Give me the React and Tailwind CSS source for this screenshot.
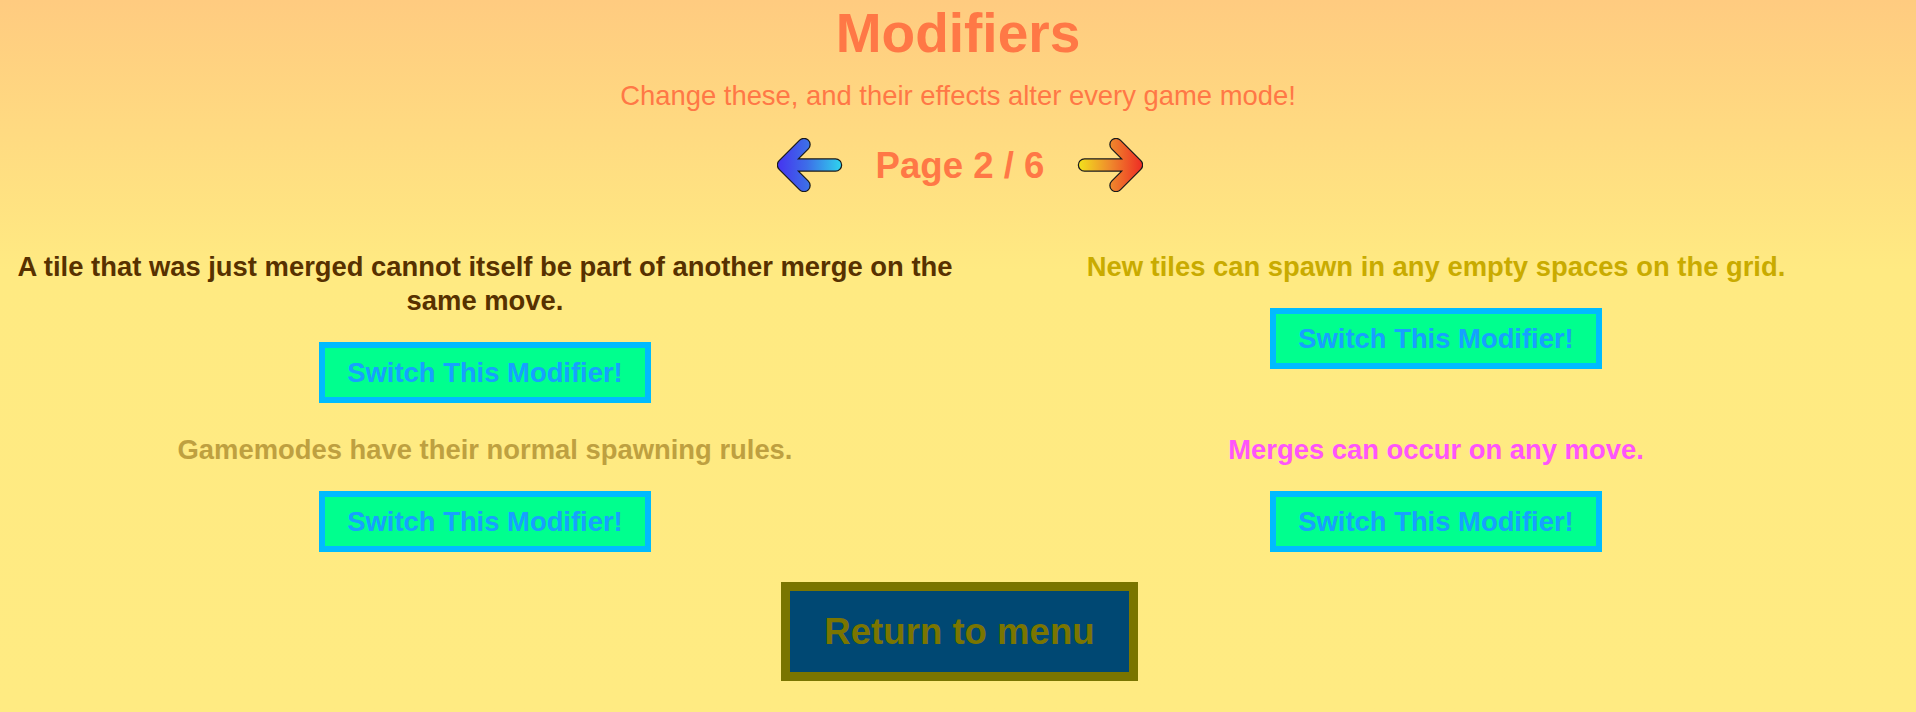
import React from "react";

function Arrow({ dir, id, stops }) {
  const d =
    dir === "left"
      ? "M27 6.5 L6.5 27 L27 47.5 M6.5 27 L58.5 27"
      : "M39 6.5 L59.5 27 L39 47.5 M59.5 27 L7.5 27";
  return (
    <svg width="66" height="54" viewBox="0 0 66 54" className="block shrink-0">
      <defs>
        <linearGradient id={id} gradientUnits="userSpaceOnUse" x1="0" y1="0" x2="66" y2="0">
          {stops.map((s, i) => (
            <stop key={i} offset={s[0]} stopColor={s[1]} />
          ))}
        </linearGradient>
      </defs>
      <path d={d} fill="none" stroke="#1a1a1a" strokeWidth="13.5" strokeLinecap="round" strokeLinejoin="round" />
      <path d={d} fill="none" stroke={`url(#${id})`} strokeWidth="11" strokeLinecap="round" strokeLinejoin="round" />
    </svg>
  );
}

function SwitchButton() {
  return (
    <button className="mt-[24px] border-[6px] border-[#00bbff] bg-[#00ff8e] px-[22px] py-[9px] text-[27.4px] font-bold leading-[31px] text-[#17a0ff]">
      Switch This Modifier!
    </button>
  );
}

function Cell({ text, color }) {
  return (
    <div className="flex flex-col items-center text-center">
      <p className={`text-[27.4px] font-bold leading-[34px] ${color}`}>{text}</p>
      <SwitchButton />
    </div>
  );
}

export default function App() {
  return (
    <div className="min-h-[712px] w-full bg-[linear-gradient(180deg,#ffcb80_0px,#ffea82_270px,#ffeb82_100%)] pt-[2px] font-['Liberation_Sans',Arial,sans-serif]">
      <h1 className="text-center text-[55px] font-bold leading-[62px] text-[#ff7846]">Modifiers</h1>
      <p className="mt-[16px] text-center text-[27.4px] leading-[31px] text-[#ff7846]">
        Change these, and their effects alter every game mode!
      </p>
      <div className="mt-[27px] flex items-center justify-center gap-[33px] pl-[4px]">
        <Arrow
          dir="left"
          id="gl"
          stops={[
            ["0", "#4632f0"],
            ["0.45", "#3d6de8"],
            ["1", "#2ed8ee"],
          ]}
        />
        <span className="text-[36.6px] font-bold leading-[41px] text-[#ff7846]">Page 2 / 6</span>
        <Arrow
          dir="right"
          id="gr"
          stops={[
            ["0", "#f2e61c"],
            ["0.5", "#ef8a2c"],
            ["1", "#ee2a24"],
          ]}
        />
      </div>
      <div className="mt-[58px] grid grid-cols-[970px_932px] gap-y-[29.5px]">
        <Cell
          text="A tile that was just merged cannot itself be part of another merge on the same move."
          color="text-[#573100]"
        />
        <Cell text="New tiles can spawn in any empty spaces on the grid." color="text-[#c9ab00]" />
        <Cell text="Gamemodes have their normal spawning rules." color="text-[#bea040]" />
        <Cell text="Merges can occur on any move." color="text-[#ff55fb]" />
      </div>
      <div className="mt-[30px] flex justify-center pl-[3px]">
        <button className="border-[9px] border-[#7a7500] bg-[#004873] px-[34px] py-[20px] text-[36.6px] font-bold leading-[41px] text-[#7a7500]">
          Return to menu
        </button>
      </div>
    </div>
  );
}
